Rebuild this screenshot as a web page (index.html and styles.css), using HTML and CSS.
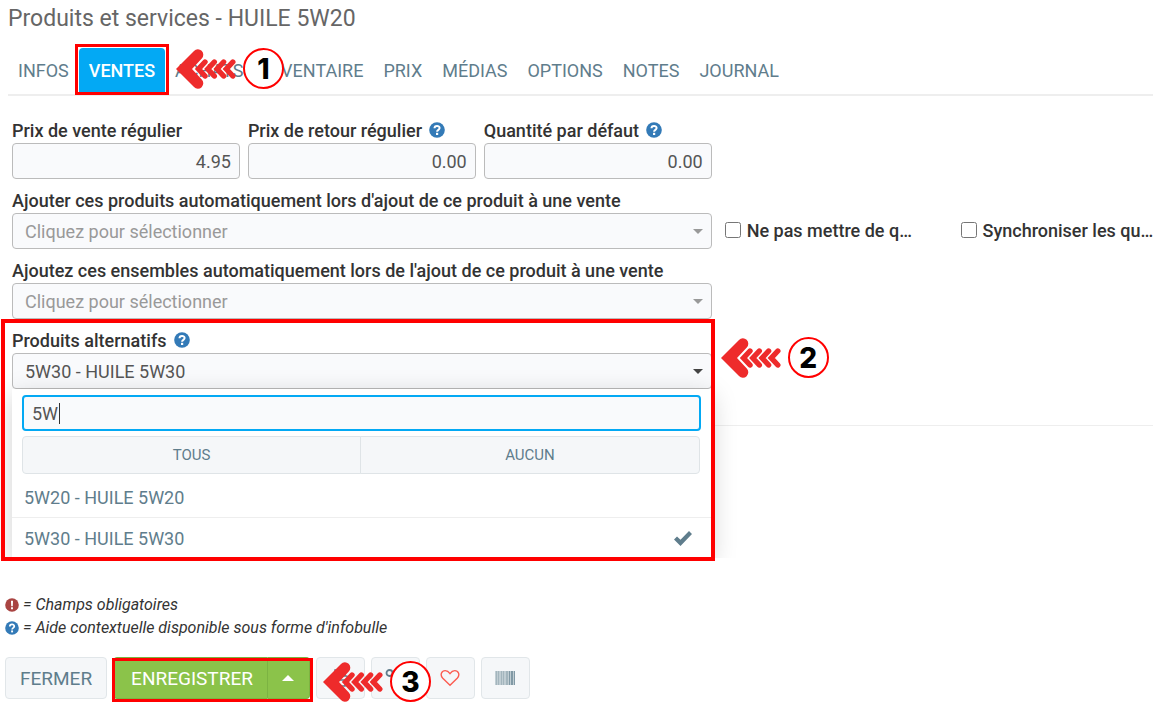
FILE: index.html
```html
<!DOCTYPE html>
<html lang="fr">
<head>
    <meta charset="UTF-8">
    <meta name="viewport" content="width=device-width, initial-scale=1.0">
    <title>Produits et services</title>
    <link rel="stylesheet" href="styles.css">
</head>
<body>
    <!-- shared shapes -->
    <svg class="sprite" aria-hidden="true">
        <symbol id="arrow" viewBox="0 0 60 40">
            <path d="M0 20 L18 2 A5.300 5.300 0 0 1 25.800 9.500 L16 20 L25.800 30.500 A5.300 5.300 0 0 1 18 38 Z" fill="#ee2b2b"/>
            <g fill="none" stroke="#ee2b2b" stroke-width="5.400" stroke-linecap="round" stroke-linejoin="miter">
                <path d="M29 13 L22.500 20 L29 27"/>
                <path d="M38.300 13 L31.800 20 L38.300 27"/>
                <path d="M47.600 13 L41.100 20 L47.600 27"/>
                <path d="M56.800 13 L50.300 20 L56.800 27"/>
            </g>
        </symbol>
        <symbol id="help" viewBox="0 0 16 16">
            <circle cx="8" cy="8" r="7.800" fill="#337ab7"/>
            <path d="M5.500 6.300 C5.500 3.200 10.600 3.200 10.600 6.100 C10.600 7.900 8.100 7.800 8.100 9.800" fill="none" stroke="#fff" stroke-width="2"/>
            <rect x="7" y="10.800" width="2.200" height="2.200" fill="#fff"/>
        </symbol>
    </svg>

    <h1 class="title">Produits et services - HUILE 5W20</h1>

    <nav class="tabs">
        <a class="tab" href="#infos">INFOS</a>
        <a class="tab active" href="#ventes">VENTES<span class="frame frame-tab"></span></a>
        <a class="tab" href="#achats">ACHATS</a>
        <a class="tab" href="#inventaire">INVENTAIRE</a>
        <a class="tab" href="#prix">PRIX</a>
        <a class="tab" href="#medias">MÉDIAS</a>
        <a class="tab" href="#options">OPTIONS</a>
        <a class="tab" href="#notes">NOTES</a>
        <a class="tab" href="#journal">JOURNAL</a>
        <span class="callout callout-tab"><svg class="arrow"><use href="#arrow"/></svg><b class="num">1</b></span>
    </nav>

    <main class="panel">
        <form class="form">
            <div class="field">
                <label for="prixvente">Prix de vente régulier</label>
                <input class="control number" type="text" id="prixvente" value="4.95">
            </div>
            <div class="field">
                <label for="prixretour">Prix de retour régulier <svg class="help"><use href="#help"/></svg></label>
                <input class="control number" type="text" id="prixretour" value="0.00">
            </div>
            <div class="field">
                <label for="quantite">Quantité par défaut <svg class="help"><use href="#help"/></svg></label>
                <input class="control number" type="text" id="quantite" value="0.00">
            </div>

            <div class="field wide">
                <label for="produits">Ajouter ces produits automatiquement lors d'ajout de ce produit à une vente</label>
                <div class="picker">
                    <select class="control empty" id="produits"><option>Cliquez pour sélectionner</option></select>
                </div>
            </div>
            <label class="check"><input type="checkbox"> Ne pas mettre de q…</label>
            <label class="check"><input type="checkbox"> Synchroniser les qu…</label>

            <div class="field wide">
                <label for="ensembles">Ajoutez ces ensembles automatiquement lors de l'ajout de ce produit à une vente</label>
                <div class="picker">
                    <select class="control empty" id="ensembles"><option>Cliquez pour sélectionner</option></select>
                </div>
            </div>

            <div class="field wide open">
                <label for="alternatifs">Produits alternatifs <svg class="help"><use href="#help"/></svg></label>
                <div class="picker">
                    <select class="control" id="alternatifs"><option>5W30 - HUILE 5W30</option></select>
                </div>
                <!-- dropdown menu -->
                <div class="menu">
                    <input class="search" type="text" aria-label="Rechercher" value="5W">
                    <div class="actions">
                        <button type="button">TOUS</button>
                        <button type="button">AUCUN</button>
                    </div>
                    <ul class="options">
                        <li><a href="#5w20">5W20 - HUILE 5W20</a></li>
                        <li><a href="#5w30">5W30 - HUILE 5W30
                            <svg class="tick" viewBox="0 0 18 15"><path d="M0 8.500 L3 5.500 L6.500 8.800 L15 0 L18 3 L6.500 15 Z" fill="#5f7d8c"/></svg></a></li>
                    </ul>
                </div>
                <span class="frame frame-menu"></span>
                <span class="callout callout-menu"><svg class="arrow"><use href="#arrow"/></svg><b class="num">2</b></span>
            </div>
        </form>
        <hr class="rule">
    </main>

    <footer class="footer">
        <p class="legend">
            <svg class="mark" viewBox="0 0 16 16"><circle cx="8" cy="8" r="7.800" fill="#a94442"/><path d="M6.800 3 H9.200 L8.900 9.300 H7.100 Z M6.900 10.500 H9.100 V12.800 H6.900 Z" fill="#fff"/></svg>
            = Champs obligatoires
        </p>
        <p class="legend">
            <svg class="mark"><use href="#help"/></svg>
            = Aide contextuelle disponible sous forme d'infobulle
        </p>
        <div class="buttons">
            <button type="button" class="btn">FERMER</button>
            <div class="group">
                <button type="button" class="btn save">ENREGISTRER</button>
                <button type="button" class="btn save more" aria-label="Plus"><i class="up"></i></button>
                <span class="frame frame-save"></span>
                <span class="callout callout-save"><svg class="arrow"><use href="#arrow"/></svg><b class="num">3</b></span>
            </div>
            <button type="button" class="btn icon" aria-label="Imprimer">
                <svg viewBox="0 0 20 20" fill="none" stroke="#5f7d8c" stroke-width="1.500"><path d="M5 8 V2 H13 L15 4 V8 M5 15 H2 V10 Q2 8 4 8 H16 Q18 8 18 10 V15 H15 M5 12 H15 V18 H5 Z"/></svg>
            </button>
            <button type="button" class="btn icon" aria-label="Outils">
                <svg viewBox="0 0 20 20" fill="none" stroke="#5f7d8c" stroke-width="1.800"><circle cx="4.500" cy="5" r="3"/><path d="M7 7 L14 14"/><circle cx="16" cy="16" r="2.800"/></svg>
            </button>
            <button type="button" class="btn icon" aria-label="Favori">
                <svg viewBox="0 0 20 20" fill="none" stroke="#fb5c51" stroke-width="1.400"><path d="M10 17.300 L2.800 10.300 C-0.600 6.500 2 2.600 5.200 2.600 C7.600 2.600 9 4.200 10 5.600 C11 4.200 12.400 2.600 14.800 2.600 C18 2.600 20.600 6.500 17.200 10.300 Z"/></svg>
            </button>
            <button type="button" class="btn icon" aria-label="Code à barres">
                <svg viewBox="0 0 20 20" fill="#5f7d8c"><path d="M0 3h20v14h-20z" opacity=".35"/><path d="M1 3h1v14h-1z M3 3h1v14h-1z M6 3h1v14h-1z M8 3h1v14h-1z M11 3h2v14h-2z" opacity=".3"/><path d="M14 3h1v14h-1z M16 3h2v14h-2z M19 3h1v14h-1z" opacity=".65"/></svg>
            </button>
        </div>
    </footer>
</body>
</html>
```

FILE: styles.css
```css
body{
    margin: 0;
    font-family: Roboto, sans-serif;
    font-size: 18px;
    color: #333;
    background-color: #fff;
}
input,select,button{
    font-family: inherit;
    font-size: 18px;
}
.sprite{
    display: none;
}
.title{
    margin: 0;
    padding: 5px 8px 0;
    font-size: 23px;
    font-weight: 400;
    line-height: 28px;
    color: #666;
}

/* tabs */
.tabs{
    position: relative;
    display: flex;
    margin: 15px 0 0 8px;
    border-bottom: 2px solid #eee;
}
.tab{
    position: relative;
    padding: 0 10px;
    line-height: 46px;
    color: #5f7d8c;
    text-decoration: none;
}
.tab.active{
    color: #fff;
    font-weight: 500;
    background-color: #03a9f4;
    border-radius: 4px 4px 0 0;
}

/* form */
.panel{
    min-height: 474px;
    padding-top: 23px;
}
.form{
    display: grid;
    grid-template-columns: repeat(4, 15fr) 13fr;
    gap: 10px 8px;
    margin-left: 12px;
}
.field label{
    display: flex;
    align-items: center;
    gap: 7px;
    box-sizing: border-box;
    height: 24px;
    padding-bottom: 2px;
    font-weight: 500;
    white-space: nowrap;
}
.field.wide{
    grid-column: 1 / span 3;
    position: relative;
}
.help{
    width: 16px;
    height: 16px;
}
.control{
    display: block;
    box-sizing: border-box;
    width: 100%;
    height: 36px;
    padding: 0 8px;
    border: 1px solid #bbb;
    border-radius: 4px;
    background-color: #f9fafc;
    color: #555;
    appearance: none;
}
.number{
    text-align: right;
}
.picker{
    position: relative;
}
.picker .control{
    padding: 0 12px;
}
.picker::after{
    content: "";
    position: absolute;
    right: 9px;
    top: 16px;
    border: 5px solid transparent;
    border-top-color: #999;
    border-bottom: 0;
}
.open .picker::after{
    border-top-color: #444;
}
.control.empty{
    color: #999;
}
.check{
    display: flex;
    align-items: center;
    gap: 6px;
    height: 36px;
    min-width: 0;
    margin-top: 23px;
    padding-left: 5px;
    font-weight: 500;
    white-space: nowrap;
    overflow: hidden;
}
.check input{
    flex: none;
    width: 16px;
    height: 16px;
    margin: 0;
}
.rule{
    margin: 36px 0 0 12px;
    border: 0;
    border-top: 1px solid #eee;
}

/* dropdown menu */
.menu{
    position: absolute;
    z-index: 1;
    top: 100%;
    left: 0;
    right: 0;
    padding-top: 6px;
    background-color: #fff;
    box-shadow: 0 6px 24px rgba(0,0,0,.18);
    clip-path: inset(-30px -30px 0 -30px);
}
.search{
    display: block;
    box-sizing: border-box;
    width: calc(100% - 21px);
    height: 36px;
    margin: 0 10px;
    padding: 0 8px;
    border: 2px solid #03a9f4;
    border-radius: 4px;
    /* text cursor */
    background: linear-gradient(#333, #333) 35px 6px / 1px 21px no-repeat #f9fafc;
    color: #555;
}
.actions{
    display: flex;
    margin: 5px 12px 3px 10px;
}
.actions button{
    flex: 1;
    height: 38px;
    border: 1px solid #dfe4e7;
    border-radius: 4px 0 0 4px;
    background-color: #f5f7f9;
    color: #5f7d8c;
    font-size: 15px;
}
.actions button + button{
    margin-left: -1px;
    border-radius: 0 4px 4px 0;
}
.options{
    margin: 0;
    padding: 0;
    list-style: none;
}
.options li + li{
    border-top: 1px solid #eee;
}
.options a{
    display: flex;
    justify-content: space-between;
    align-items: center;
    height: 40px;
    padding: 0 20px 0 12px;
    color: #5f7d8c;
    text-decoration: none;
}
.tick{
    width: 18px;
    height: 15px;
}

/* footer */
.footer{
    padding: 0 5px 7px;
}
.legend{
    display: flex;
    align-items: center;
    gap: 4px;
    margin: 0;
    font-size: 16px;
    font-style: italic;
    line-height: 23px;
}
.mark{
    width: 14px;
    height: 14px;
}
.buttons{
    display: flex;
    gap: 6px;
    margin-top: 18px;
}
.group{
    position: relative;
    display: flex;
}
.btn{
    height: 42px;
    padding: 0 14px;
    border: 1px solid #e1e6e9;
    border-radius: 4px;
    background-color: #f5f7f9;
    color: #5f7d8c;
    font-size: 19px;
}
.save{
    padding: 0 14px 0 17px;
    border-color: #7cb342;
    border-radius: 4px 0 0 4px;
    background-color: #8bc34a;
    color: #fff;
}
.more{
    display: flex;
    align-items: center;
    justify-content: center;
    width: 42px;
    padding: 0;
    border-left: 0;
    border-radius: 0 4px 4px 0;
}
.up{
    border: 6px solid transparent;
    border-bottom-color: #fff;
    border-top: 0;
}
.icon{
    display: flex;
    align-items: center;
    justify-content: center;
    width: 49px;
    padding: 0;
}
.icon svg{
    width: 20px;
    height: 20px;
}

/* numbered steps */
.frame{
    position: absolute;
    z-index: 2;
    border: 3px solid #f00;
    pointer-events: none;
}
.frame-tab{
    inset: -4px -4px -1px -4px;
}
.frame-menu{
    inset: -10px -3px -172px -11px;
    border-width: 4px;
}
.frame-save{
    inset: 1px -3px -3px -1px;
}
.callout{
    position: absolute;
    z-index: 3;
    display: flex;
    align-items: center;
    gap: 7px;
}
.callout-tab{
    top: 0;
    left: 168px;
}
.callout-menu{
    top: 8px;
    left: calc(100% + 9px);
}
.callout-save{
    top: 4px;
    left: calc(100% + 13px);
}
.arrow{
    width: 60px;
    height: 40px;
}
.num{
    box-sizing: border-box;
    width: 41px;
    height: 41px;
    border: 2px solid #f00;
    border-radius: 50%;
    background-color: #fff;
    color: #000;
    font: 800 28px/38px Inter, sans-serif;
    text-align: center;
}
```
